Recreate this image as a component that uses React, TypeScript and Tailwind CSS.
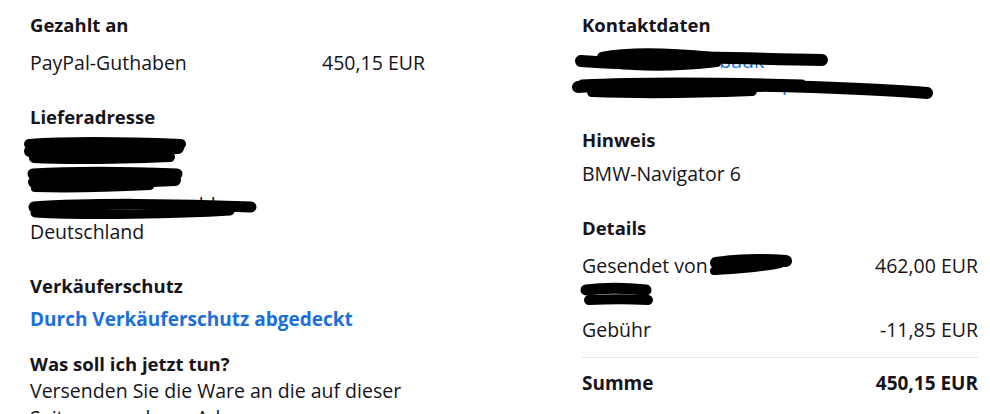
import { FC } from 'react';

type Stroke = { d: string; sw: number };

// black marker redaction drawn over a line of text
const Scribble: FC<{ w: number; h: number; paths: Stroke[] }> = ({ w, h, paths }) => (
    <svg
        className="absolute left-0 top-0 pointer-events-none overflow-visible"
        width={w}
        height={h}
        viewBox={`0 0 ${w} ${h}`}
    >
        {paths.map((p, i) => (
            <path key={i} d={p.d} stroke="#000" strokeWidth={p.sw} strokeLinecap="round" strokeLinejoin="round" fill="none" />
        ))}
    </svg>
);

const Heading: FC<{ children: React.ReactNode; className?: string }> = ({ children, className = '' }) => (
    <div className={`font-bold text-[18.5px] ${className}`}>{children}</div>
);

export default function App() {
    return (
        <div
            className="w-[990px] h-[414px] overflow-hidden bg-white text-[#16141a] text-[19.5px] leading-[27px]"
            style={{ fontFamily: '"Open Sans", Lato, sans-serif' }}
        >
            <div className="flex gap-[157px] pl-[30px] pt-[11px]">
                {/* Left column */}
                <div className="w-[395px] flex flex-col">
                    <Heading>Gezahlt an</Heading>
                    <div className="mt-[11px] flex justify-between">
                        <span>PayPal-Guthaben</span>
                        <span>450,15 EUR</span>
                    </div>

                    <Heading className="mt-[27px]">Lieferadresse</Heading>
                    <div className="relative mt-[7px]">
                        <div className="h-[27px]" />
                        <div className="h-[27px]" />
                        <div className="h-[27px] pl-[158px]">alde</div>
                        <div>Deutschland</div>
                        <Scribble
                            w={260}
                            h={108}
                            paths={[
                                { d: 'M-1 7 C 40 4, 100 5, 151 7', sw: 10 },
                                { d: 'M0 14 C 50 12, 110 13, 148 11', sw: 12 },
                                { d: 'M4 21 C 40 23, 90 22, 140 20', sw: 10 },
                                { d: 'M3 37 C 50 34, 100 35, 147 37', sw: 11 },
                                { d: 'M4 45 C 50 46, 110 45, 145 43', sw: 12 },
                                { d: 'M5 51 C 40 52, 80 51, 120 49', sw: 8 },
                                { d: 'M4 70 C 60 66, 150 67, 221 70', sw: 11 },
                                { d: 'M5 76 C 60 79, 150 77, 200 74', sw: 9 },
                            ]}
                        />
                    </div>

                    <Heading className="mt-[27px]">Verkäuferschutz</Heading>
                    <div className="mt-[7px] font-bold text-[19px] text-[#1a6fdc]">Durch Verkäuferschutz abgedeckt</div>

                    <Heading className="mt-[17px]">Was soll ich jetzt tun?</Heading>
                    <div>Versenden Sie die Ware an die auf dieser Seite angegebene Adresse.</div>
                </div>

                {/* Right column */}
                <div className="w-[396px] flex flex-col">
                    <Heading>Kontaktdaten</Heading>
                    <div className="relative mt-[9px] text-[#1a6fdc]">
                        <div className="h-[27px] pl-[120px]">e-bauk</div>
                        <div className="h-[27px] pl-[200px]">l</div>
                        <Scribble
                            w={360}
                            h={54}
                            paths={[
                                { d: 'M-1 14 C 30 16, 50 18, 80 13 C 110 8, 160 12, 240 13', sw: 12 },
                                { d: 'M20 10 C 50 4, 90 6, 130 10', sw: 10 },
                                { d: 'M30 17 C 60 21, 100 20, 135 16', sw: 8 },
                                { d: 'M-4 40 C 40 36, 150 38, 230 40 C 280 42, 320 44, 345 46', sw: 12 },
                                { d: 'M10 45 C 60 47, 120 46, 170 44', sw: 10 },
                                { d: 'M0 36 C 60 33, 150 34, 220 36', sw: 7 },
                            ]}
                        />
                    </div>

                    <Heading className="mt-[25px]">Hinweis</Heading>
                    <div className="mt-[7px]">BMW-Navigator 6</div>

                    <Heading className="mt-[27px]">Details</Heading>
                    <div className="relative mt-[11px]">
                        <div className="flex justify-between">
                            <span>Gesendet von</span>
                            <span>462,00 EUR</span>
                        </div>
                        <div className="mt-[4px] h-[27px]" />
                        <Scribble
                            w={396}
                            h={58}
                            paths={[
                                { d: 'M134 11 C 150 8, 180 7, 204 9', sw: 12 },
                                { d: 'M132 19 C 150 18, 175 17, 198 12', sw: 8 },
                                { d: 'M4 38 C 20 36, 45 36, 64 38', sw: 11 },
                                { d: 'M7 48 C 25 47, 50 47, 66 48', sw: 10 },
                            ]}
                        />
                    </div>
                    <div className="mt-[6px] flex justify-between">
                        <span>Gebühr</span>
                        <span>-11,85 EUR</span>
                    </div>
                    <div className="mt-[14px] border-t border-[#e6e7e9]" />
                    <div className="mt-[12px] flex justify-between font-bold text-[19px]">
                        <span>Summe</span>
                        <span>450,15 EUR</span>
                    </div>
                </div>
            </div>
        </div>
    );
}
